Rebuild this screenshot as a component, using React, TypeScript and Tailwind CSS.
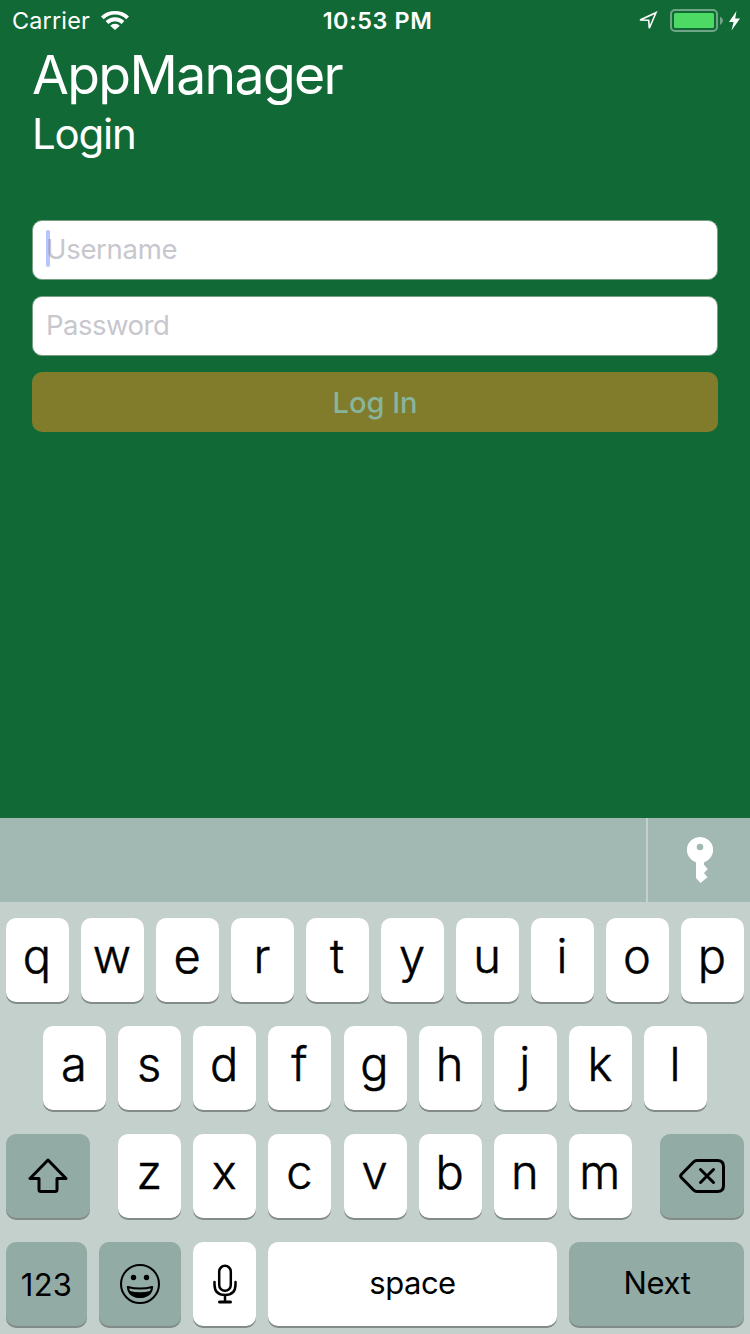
import type { ReactNode } from "react";

const row1 = ["q", "w", "e", "r", "t", "y", "u", "i", "o", "p"];
const row2 = ["a", "s", "d", "f", "g", "h", "j", "k", "l"];
const row3 = ["z", "x", "c", "v", "b", "n", "m"];

function Key({ children, className = "w-[63px] bg-white" }: { children: ReactNode; className?: string }) {
  return (
    <button
      className={`flex h-[84px] shrink-0 items-center justify-center rounded-[10px] shadow-[0_2px_0_#828b88] ${className}`}
    >
      {children}
    </button>
  );
}

function Letter({ char }: { char: string }) {
  return (
    <Key>
      <span className="pr-px pb-[8px] text-[47px] leading-[60px] font-light [-webkit-text-stroke:0.5px_black]">{char}</span>
    </Key>
  );
}

function StatusBar() {
  return (
    <header className="grid h-10 grid-cols-[1fr_auto_1fr] items-center text-white">
      <div className="flex items-center pl-3">
        <span className="w-[89px] pt-[2px] text-[23.400px] leading-[38px] tracking-[0.2px]">Carrier</span>
        <svg width="28" height="20" viewBox="0 0 28 20" fill="white">
          <path d="M0 6.600A20 20 0 0 1 28 6.600L25.300 9.300A15.800 15.800 0 0 0 2.700 9.300Z" />
          <path d="M4.600 11.100A13.200 13.200 0 0 1 23.400 11.100L20.600 13.900A9.300 9.300 0 0 0 7.400 13.900Z" />
          <path d="M9.200 15.700A6.800 6.800 0 0 1 18.800 15.700L14 20Z" />
        </svg>
      </div>
      <span className="pt-[2px] pl-[5px] text-[23.400px] leading-[38px] font-semibold tracking-[0.600px]">10:53 PM</span>
      <div className="flex items-center justify-end pt-px pr-[9px]">
        <svg className="mr-[11px]" width="21" height="20" viewBox="0 0 21 20" fill="none" stroke="white" strokeWidth="1.600">
          <path d="M2 9L18 1.700L11.300 17.300L10.700 9.300Z" />
        </svg>
        <svg width="53" height="24" viewBox="0 0 53 24">
          <rect x="1" y="1" width="46" height="21" rx="4" fill="none" stroke="#70a586" strokeWidth="2" />
          <rect x="4" y="4" width="40" height="15" rx="1.500" fill="#4cd964" />
          <path d="M50 7.500Q53 9.500 53 11.700T50 16Z" fill="#70a586" />
        </svg>
        <svg className="ml-[6px]" width="12" height="20" viewBox="0 0 12 20" fill="white">
          <path d="M7.500 0L0 11H4.600L2.500 19.500L11 7.500H6.200Z" />
        </svg>
      </div>
    </header>
  );
}

function ShiftIcon() {
  return (
    <svg width="40" height="36" viewBox="0 0 40 36" fill="none" stroke="black" strokeWidth="3" strokeLinejoin="round">
      <path d="M20 2L2 20.500H11V31.500Q11 33.500 13 33.500H27Q29 33.500 29 31.500V20.500H38Z" />
    </svg>
  );
}

function DeleteIcon() {
  return (
    <svg width="46" height="34" viewBox="0 0 46 34" fill="none" stroke="black" strokeWidth="3" strokeLinejoin="round" strokeLinecap="round">
      <path d="M18 1.500H38.500Q44.500 1.500 44.500 7.500V26.500Q44.500 32.500 38.500 32.500H18Q16 32.500 14.500 31L2.300 18.500Q1 17 2.300 15.500L14.500 3Q16 1.500 18 1.500Z" />
      <path d="M21.500 10.500L34.500 23.500M34.500 10.500L21.500 23.500" />
    </svg>
  );
}

function EmojiIcon() {
  return (
    <svg width="40" height="40" viewBox="0 0 40 40">
      <circle cx="20" cy="20" r="19" fill="none" stroke="black" strokeWidth="2" />
      <circle cx="13.500" cy="13.500" r="2.700" />
      <circle cx="26.500" cy="13.500" r="2.700" />
      <path d="M7.800 23Q20 26.200 32.200 23Q31 33 20 33Q9 33 7.800 23Z" fill="none" stroke="black" strokeWidth="2" strokeLinejoin="round" />
      <path d="M8.800 26.700Q20 30 31.200 26.700Q28.500 34 20 34T8.800 26.700Z" />
    </svg>
  );
}

function MicIcon() {
  return (
    <svg width="24" height="40" viewBox="0 0 24 40" fill="none" stroke="black" strokeWidth="2.500" strokeLinecap="round">
      <rect x="6.200" y="1.800" width="11.600" height="25" rx="5.800" />
      <path d="M1.500 18V20.500Q1.500 31 12 31T22.500 20.500V18M12 31V37" />
      <path d="M6.500 38H17.500" strokeWidth="3" />
    </svg>
  );
}

function KeyIcon() {
  return (
    <svg width="26" height="46" viewBox="0 0 26 46" fill="white">
      <path
        fillRule="evenodd"
        d="M13 0A13 13 0 0 1 17 25.400V27.800L20.800 32L17 36L20.500 40.300L13.500 46L9 41V25.400A13 13 0 0 1 13 0ZM13 6.700A3.300 3.300 0 1 0 13 13.300A3.300 3.300 0 1 0 13 6.700Z"
      />
    </svg>
  );
}

export default function App() {
  return (
    <div className="flex h-[1334px] w-[750px] flex-col overflow-hidden bg-[#116936] font-['Inter','Liberation_Sans',sans-serif] text-black">
      <StatusBar />
      <main className="flex flex-1 flex-col px-8">
        <h1 className="mt-[3px] text-[53.500px] leading-[64px] tracking-[-1.650px] text-white">AppManager</h1>
        <h2 className="mt-px text-[42px] leading-[52px] tracking-[-1.200px] text-white">Login</h2>
        <form className="mt-[60px] flex flex-col gap-4">
          <div className="relative flex h-[60px] items-center rounded-[10px] border border-[#76a086] bg-white pb-px pl-[13px] text-[27.500px] tracking-[-0.300px] text-[#c7c7cd]">
            Username
            <span className="absolute top-[9px] left-[13px] h-[37px] w-1 rounded-[2px] bg-[#5d7ff8]/45" />
          </div>
          <div className="flex h-[60px] items-center rounded-[10px] border border-[#76a086] bg-white pb-px pl-[13px] text-[27.500px] tracking-[-0.500px] text-[#c7c7cd]">
            Password
          </div>
          <button type="button" className="h-[60px] rounded-[10px] bg-[#807c2c] pt-[2px] text-[29px] font-medium text-[#88b49b]">
            Log In
          </button>
        </form>
      </main>

      <section className="flex h-[516px] flex-col bg-[#c3d0cc]">
        <div className="flex h-[84px] gap-[2px]">
          <div className="w-[646px] bg-[#a2b8b2]" />
          <div className="flex flex-1 items-center justify-center bg-[#a2b8b2] pl-px">
            <KeyIcon />
          </div>
        </div>
        <div className="flex flex-col gap-6 pt-4">
          <div className="flex gap-3 pl-[6px]">
            {row1.map((c) => <Letter key={c} char={c} />)}
          </div>
          <div className="flex gap-[12.125px] pl-[43px]">
            {row2.map((c) => <Letter key={c} char={c} />)}
          </div>
          <div className="flex justify-between px-[6px]">
            <Key className="w-[84px] bg-[#92aba5]"><ShiftIcon /></Key>
            <div className="flex gap-[12.125px]">
              {row3.map((c) => <Letter key={c} char={c} />)}
            </div>
            <Key className="w-[84px] bg-[#92aba5]"><DeleteIcon /></Key>
          </div>
          <div className="flex gap-3 px-[6px]">
            <Key className="w-[81px] bg-[#92aba5]"><span className="pt-[2px] text-[31px] tracking-[0.200px]">123</span></Key>
            <Key className="w-[82px] bg-[#92aba5]"><EmojiIcon /></Key>
            <Key><MicIcon /></Key>
            <Key className="w-[289px] bg-white"><span className="pb-[2px] text-[31px] tracking-[-0.500px]">space</span></Key>
            <Key className="w-[175px] bg-[#92aba5]"><span className="pb-[2px] pl-px text-[31px] tracking-[-0.300px]">Next</span></Key>
          </div>
        </div>
      </section>
    </div>
  );
}
